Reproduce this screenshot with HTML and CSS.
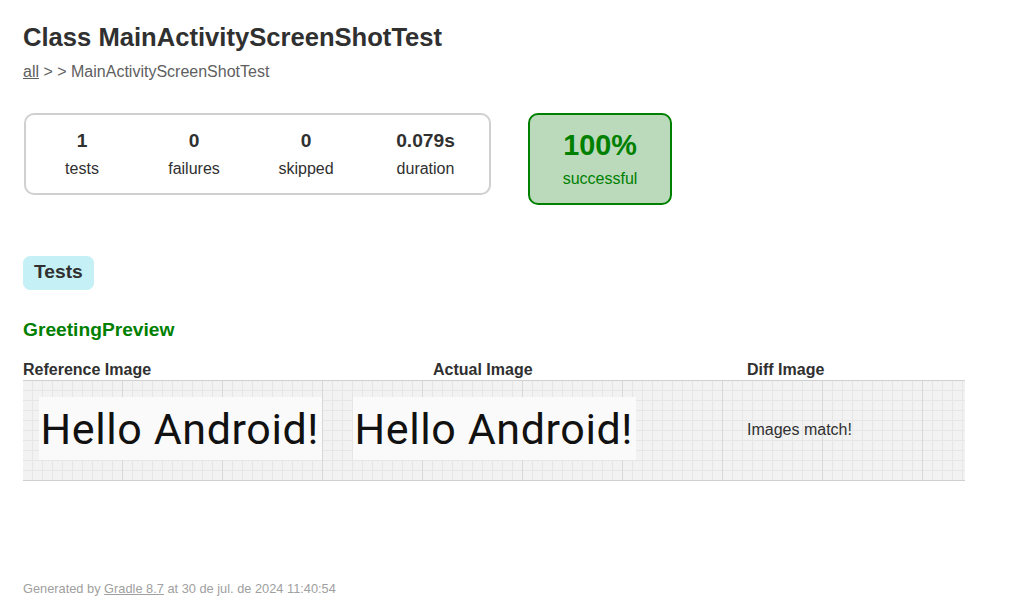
FILE: index.html
```html
<!DOCTYPE html>
<html lang="en">
<head>
<meta charset="utf-8">
<title>Test results - Class MainActivityScreenShotTest</title>
<link rel="stylesheet" href="styles.css">
</head>
<body>
<div class="content">
  <h1 class="title">Class MainActivityScreenShotTest</h1>
  <div class="breadcrumbs"><a href="#">all</a> &gt; &gt; MainActivityScreenShotTest</div>

  <div class="summary">
    <div class="summary-group">
      <div class="info-box">
        <div class="counter">1</div>
        <p>tests</p>
      </div>
      <div class="info-box">
        <div class="counter">0</div>
        <p>failures</p>
      </div>
      <div class="info-box">
        <div class="counter">0</div>
        <p>skipped</p>
      </div>
      <div class="info-box duration">
        <div class="counter">0.079s</div>
        <p>duration</p>
      </div>
    </div>
    <div class="success-rate">
      <div class="percent">100%</div>
      <p>successful</p>
    </div>
  </div>

  <div class="tab-links">
    <div class="tab-link selected"><a href="#">Tests</a></div>
  </div>

  <h2 class="test-name">GreetingPreview</h2>

  <div class="images">
    <div class="img-heads">
      <div class="img-head">Reference Image</div>
      <div class="img-head indent">Actual Image</div>
      <div class="img-head indent">Diff Image</div>
    </div>
    <div class="img-row">
      <div class="img-cell center">
        <div class="shot">Hello Android!</div>
      </div>
      <div class="img-cell center">
        <div class="shot">Hello Android!</div>
      </div>
      <div class="img-cell indent">
        <div class="diff-text">Images match!</div>
      </div>
    </div>
  </div>

  <div class="footer">Generated by <a href="#">Gradle 8.7</a> at 30 de jul. de 2024 11:40:54</div>
</div>
</body>
</html>
```

FILE: styles.css
```css
html, body {
  margin: 0;
  padding: 0;
  background: #ffffff;
}

body {
  font-family: "Liberation Sans", Arial, sans-serif;
  font-size: 16px;
  color: #303030;
}

a {
  color: inherit;
}

.content {
  padding: 23px 23px 20px 23px;
}

.title {
  margin: 0 0 11px 0;
  font-size: 25.6px;
  font-weight: bold;
  line-height: 29px;
  white-space: nowrap;
  color: #303030;
}

.breadcrumbs,
.breadcrumbs a {
  color: #606060;
  line-height: 18px;
}

/* summary */
.summary {
  display: flex;
  align-items: flex-start;
  margin-top: 32px;
}

.summary-group {
  display: flex;
  border: solid 2px #d0d0d0;
  border-radius: 10px;
  margin-left: 1px;
}

.info-box {
  width: 112px;
  padding: 15px 0;
  text-align: center;
}

.info-box.duration {
  width: 127px;
}

.info-box p,
.success-rate p {
  margin: 0;
  line-height: 18px;
}

.counter {
  font-size: 19.2px;
  font-weight: bold;
  line-height: 22px;
  margin-bottom: 8px;
}

.success-rate {
  width: 140px;
  margin-left: 37px;
  padding: 14px 0 15px 0;
  text-align: center;
  border: solid 2px #008000;
  border-radius: 10px;
  background-color: #bbd9bb;
  color: #008000;
}

.percent {
  font-size: 28.8px;
  font-weight: bold;
  line-height: 33px;
  margin-bottom: 8px;
}

/* tabs */
.tab-links {
  display: flex;
  margin-top: 51px;
}

.tab-link {
  padding: 4px 10px 6px 10px;
  border: solid 1px #d4d4d4;
  border-radius: 7px;
  background-color: #f0f0f0;
}

.tab-link.selected {
  background-color: #c5f0f5;
  border-color: #c5f0f5;
}

.tab-link a {
  display: block;
  font-size: 19.2px;
  font-weight: bold;
  line-height: 22px;
  text-decoration: none;
  color: #303030;
}

.test-name {
  margin: 29px 0 0 0;
  font-size: 19.2px;
  font-weight: bold;
  line-height: 22px;
  color: #008000;
}

/* image table */
.images {
  margin-top: 19px;
  width: 942px;
}

.img-heads {
  display: grid;
  grid-template-columns: 314px 314px 314px;
}

.img-head {
  font-weight: bold;
  line-height: 20px;
  white-space: nowrap;
}

.indent {
  padding-left: 96px;
}

.img-row {
  display: grid;
  grid-template-columns: 314px 314px 314px;
  height: 99px;
  border-top: solid 1px #d0d0d0;
  border-bottom: solid 1px #d0d0d0;
  background-color: #f2f2f2;
  background-image:
    linear-gradient(to right, transparent 99px, #d8d8d8 99px),
    linear-gradient(to right, transparent 9px, #e6e6e6 9px),
    linear-gradient(to bottom, transparent 9px, #e6e6e6 9px);
  background-size: 100px 100%, 10px 100%, 100% 10px;
}

.img-cell {
  display: flex;
  align-items: flex-start;
}

.img-cell.center {
  justify-content: center;
}

.shot {
  box-sizing: border-box;
  width: 283px;
  height: 63px;
  margin-top: 16px;
  padding: 6px 0 0 2px;
  background-color: #fafafa;
  font-family: Roboto, "Noto Sans", sans-serif;
  font-size: 43px;
  letter-spacing: 0.6px;
  line-height: 52px;
  color: #111111;
  white-space: nowrap;
  overflow: hidden;
}

.diff-text {
  margin-top: 40px;
  line-height: 18px;
  white-space: nowrap;
}

/* footer */
.footer {
  margin-top: 100px;
  font-size: 12.8px;
  line-height: 15px;
  white-space: nowrap;
  color: #a0a0a0;
}

.footer a {
  color: #a0a0a0;
}
```
